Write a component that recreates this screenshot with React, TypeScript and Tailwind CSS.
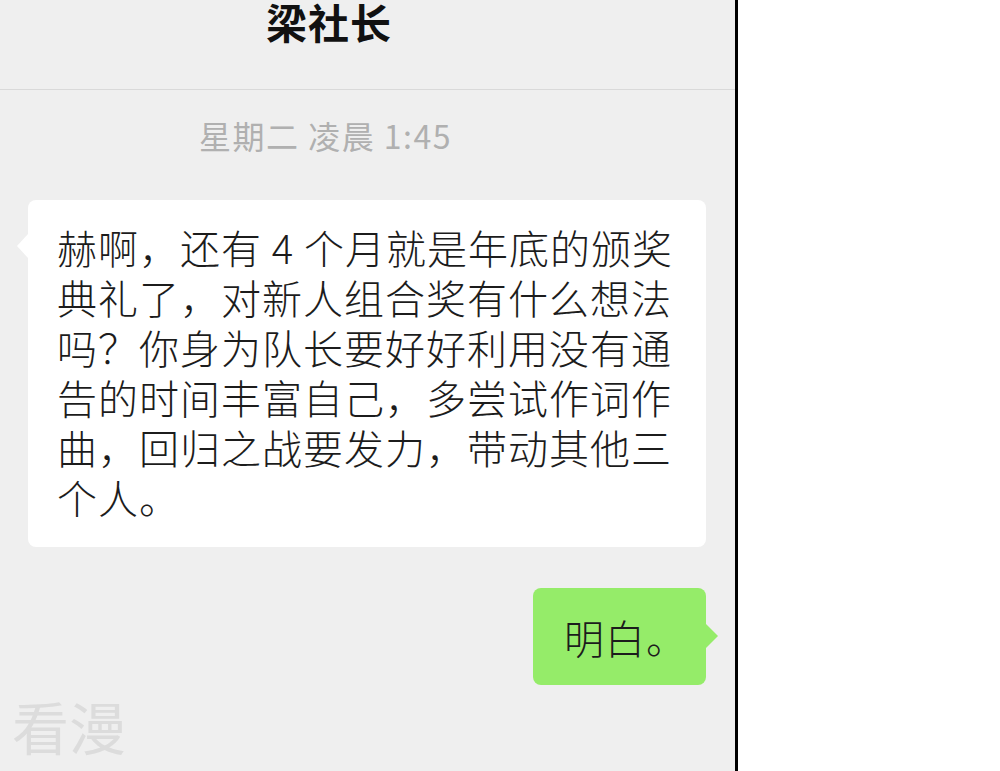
const lines = [
  "赫啊，还有 4 个月就是年底的颁奖",
  "典礼了，对新人组合奖有什么想法",
  "吗？你身为队长要好好利用没有通",
  "告的时间丰富自己，多尝试作词作",
  "曲，回归之战要发力，带动其他三",
  "个人。",
];

const ChatPanel = () => {
  return (
    <div className="flex h-full w-[735px] flex-col overflow-hidden bg-[#efefef] font-['Noto_Sans_CJK_SC',sans-serif]">
      <header className="h-[90px] shrink-0 border-b border-[#d9d9d9] pl-[266px] pt-[1px]">
        <h1 className="text-[41px] font-bold leading-[41px] tracking-[1px] text-[#111]">梁社长</h1>
      </header>

      <p className="mt-[29px] pl-[199px] text-[32px] leading-[32px] tracking-[1.5px] text-[#b0b0b0]">
        星期二 凌晨 1:45
      </p>

      <div className="relative ml-[28px] mt-[49px] h-[347px] w-[678px] rounded-[8px] bg-white pl-[29px] pt-[22px]">
        <span className="absolute left-[-11px] top-[34px] h-0 w-0 border-y-[12px] border-r-[11px] border-y-transparent border-r-white" />
        {lines.map((line) => (
          <p
            key={line}
            className="whitespace-pre text-[40px] font-light leading-[50px] tracking-[1px] text-[#1c1c1c]"
          >
            {line}
          </p>
        ))}
      </div>

      <div className="relative ml-auto mr-[29px] mt-[41px] flex h-[97px] w-[173px] items-center rounded-[8px] bg-[#95ec69] pl-[31px]">
        <p className="text-[40px] font-light leading-[40px] tracking-[1px] text-[#1c1c1c]">明白。</p>
        <span className="absolute right-[-12px] top-[36px] h-0 w-0 border-y-[12px] border-l-[12px] border-y-transparent border-l-[#95ec69]" />
      </div>

      <p className="mt-[12px] pl-[12px] text-[57px] leading-[57px] text-[#dcdcdc]">看漫</p>
    </div>
  );
};

const App = () => {
  return (
    <div className="flex h-[771px] w-[1000px] bg-white">
      <ChatPanel />
      <div className="w-[3px] bg-black" />
      <div className="flex-1 bg-white" />
    </div>
  );
};

export default App;
